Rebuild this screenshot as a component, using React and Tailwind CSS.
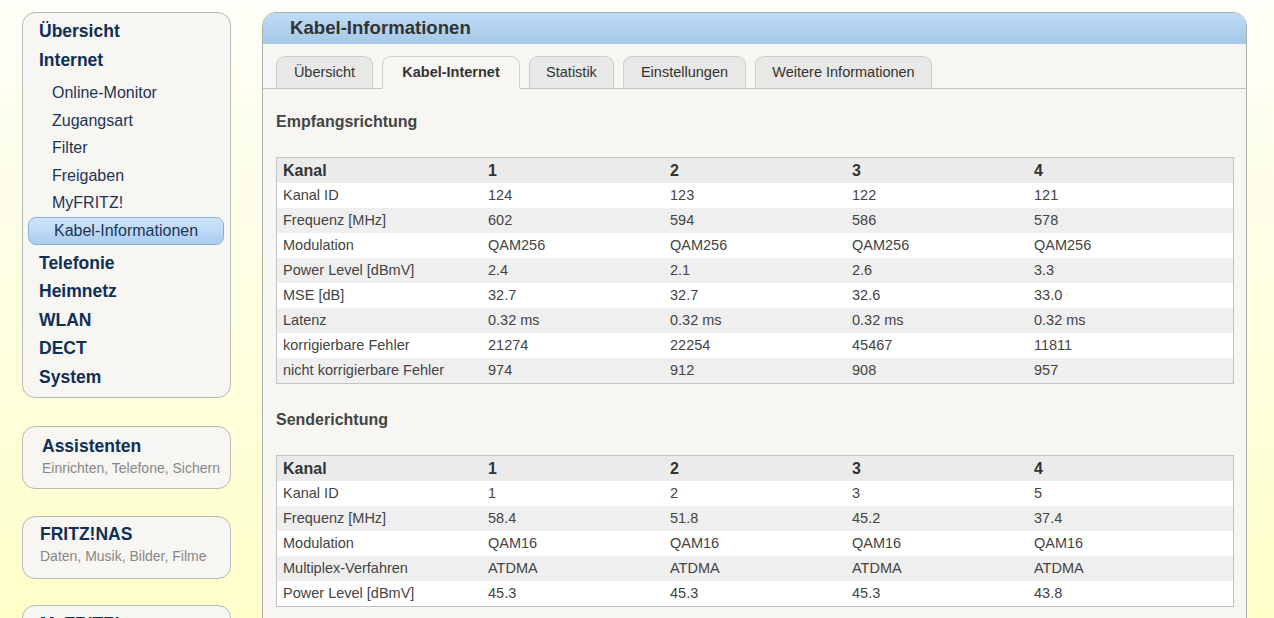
const FONT = "font-['Liberation_Sans',Arial,sans-serif]"

const TABS = [
  { label: 'Übersicht', w: 'w-[97px]' },
  { label: 'Kabel-Internet', w: 'w-[138px]', active: true },
  { label: 'Statistik', w: 'w-[85px]' },
  { label: 'Einstellungen', w: 'w-[123px]' },
  { label: 'Weitere Informationen', w: 'w-[177px]' },
]

const DOWNSTREAM = [
  ['Kanal ID', '124', '123', '122', '121'],
  ['Frequenz [MHz]', '602', '594', '586', '578'],
  ['Modulation', 'QAM256', 'QAM256', 'QAM256', 'QAM256'],
  ['Power Level [dBmV]', '2.4', '2.1', '2.6', '3.3'],
  ['MSE [dB]', '32.7', '32.7', '32.6', '33.0'],
  ['Latenz', '0.32 ms', '0.32 ms', '0.32 ms', '0.32 ms'],
  ['korrigierbare Fehler', '21274', '22254', '45467', '11811'],
  ['nicht korrigierbare Fehler', '974', '912', '908', '957'],
]

const UPSTREAM = [
  ['Kanal ID', '1', '2', '3', '5'],
  ['Frequenz [MHz]', '58.4', '51.8', '45.2', '37.4'],
  ['Modulation', 'QAM16', 'QAM16', 'QAM16', 'QAM16'],
  ['Multiplex-Verfahren', 'ATDMA', 'ATDMA', 'ATDMA', 'ATDMA'],
  ['Power Level [dBmV]', '45.3', '45.3', '45.3', '43.8'],
]

const SUB_ITEMS = ['Online-Monitor', 'Zugangsart', 'Filter', 'Freigaben', 'MyFRITZ!']
const MAIN_BOTTOM = ['Telefonie', 'Heimnetz', 'WLAN', 'DECT', 'System']

const ROW = 'grid grid-cols-[204px_182px_182px_182px_1fr] h-[25px] items-center'

function MainItem({ children }) {
  return <div className="h-[28.5px] leading-[28.5px] pl-[16px] text-[17.5px] font-bold text-[#0f2f57]">{children}</div>
}

function DataTable({ rows }) {
  return (
    <div className="border border-[#c3c3c3] bg-white">
      <div className={`${ROW} bg-[#ebebeb] text-[16px] font-bold text-[#333]`}>
        <div className="pl-[6px]">Kanal</div>
        <div className="pl-[7px]">1</div>
        <div className="pl-[7px]">2</div>
        <div className="pl-[7px]">3</div>
        <div className="pl-[7px]">4</div>
      </div>
      {rows.map((r, i) => (
        <div key={r[0]} className={`${ROW} text-[14.5px] text-[#444] ${i % 2 ? 'bg-[#efefef]' : 'bg-white'}`}>
          {r.map((c, j) => (
            <div key={j} className={j === 0 ? 'pl-[6px] whitespace-nowrap' : 'pl-[7px]'}>{c}</div>
          ))}
        </div>
      ))}
    </div>
  )
}

export default function App() {
  return (
    <div className={`${FONT} h-[618px] overflow-hidden bg-linear-to-b from-[#fefef8] to-[#ffffca]`}>
      <div className="flex items-start gap-[31px] pt-[12px] pl-[22px]">

        {/* sidebar */}
        <div className="w-[209px] flex-none flex flex-col">
          <div className="h-[386px] rounded-[13px] border border-[#b5bcb5] bg-[#f7f6f2] pt-[4px]">
            <MainItem>Übersicht</MainItem>
            <MainItem>Internet</MainItem>
            <div className="mt-[5px]">
              {SUB_ITEMS.map(s => (
                <div key={s} className="h-[27.6px] leading-[27.6px] pl-[29px] text-[16px] text-[#1d3455]">{s}</div>
              ))}
              <div className="ml-[5px] mr-[6px] h-[27.6px] leading-[25.6px] pl-[25px] rounded-[8px] border border-[#8eb1d3] bg-linear-to-b from-[#cfe5fa] to-[#a9cdf0] text-[16px] text-[#1d3455]">
                Kabel-Informationen
              </div>
            </div>
            <div className="mt-[4px]">
              {MAIN_BOTTOM.map(m => <MainItem key={m}>{m}</MainItem>)}
            </div>
          </div>

          <div className="mt-[28px] h-[63px] rounded-[13px] border border-[#b5bcb5] bg-[#f7f6f2] pt-[8px] pl-[19px]">
            <div className="text-[17.5px] leading-[22px] font-bold text-[#0f2f57]">Assistenten</div>
            <div className="mt-[2px] text-[14px] leading-[18px] text-[#888]">Einrichten, Telefone, Sichern</div>
          </div>

          <div className="mt-[27px] h-[63px] rounded-[13px] border border-[#b5bcb5] bg-[#f7f6f2] pt-[6px] pl-[17px]">
            <div className="text-[17.5px] leading-[22px] font-bold text-[#0f2f57]">FRITZ!NAS</div>
            <div className="mt-[2px] text-[14px] leading-[18px] text-[#888]">Daten, Musik, Bilder, Filme</div>
          </div>

          <div className="mt-[26px] h-[63px] rounded-[13px] border border-[#b5bcb5] bg-[#f7f6f2] pt-[7px] pl-[17px]">
            <div className="text-[17.5px] leading-[22px] font-bold text-[#0f2f57]">MyFRITZ!</div>
          </div>
        </div>

        {/* main panel */}
        <div className="w-[985px] flex-none h-[640px] rounded-t-[14px] border border-[#a9b3a9] bg-[#f7f6f2] overflow-hidden">
          <div className="h-[31px] bg-linear-to-b from-[#bedcf6] to-[#a6c8e6] pl-[27px] text-[18.6px] leading-[30px] font-bold text-[#333]">
            Kabel-Informationen
          </div>

          <div className="mt-[12px] flex gap-[9px] pl-[13px] border-b border-[#c4c4c4]">
            {TABS.map(t => (
              <div
                key={t.label}
                className={`${t.w} h-[32px] rounded-t-[9px] border border-[#cdcdcd] text-center whitespace-nowrap text-[14.5px] leading-[30px] text-[#333] ${t.active ? 'bg-[#f7f6f2] font-bold border-b-[#f7f6f2] -mb-px h-[33px]' : 'bg-[#e8e8e6] border-b-0'}`}
              >
                {t.label}
              </div>
            ))}
          </div>

          <div className="pl-[13px] pr-[12px]">
            <h2 className="mt-[23px] mb-[25px] text-[16px] leading-[20px] font-bold text-[#444]">Empfangsrichtung</h2>
            <DataTable rows={DOWNSTREAM} />
            <h2 className="mt-[26px] mb-[25px] text-[16px] leading-[20px] font-bold text-[#444]">Senderichtung</h2>
            <DataTable rows={UPSTREAM} />
          </div>
        </div>

      </div>
    </div>
  )
}
